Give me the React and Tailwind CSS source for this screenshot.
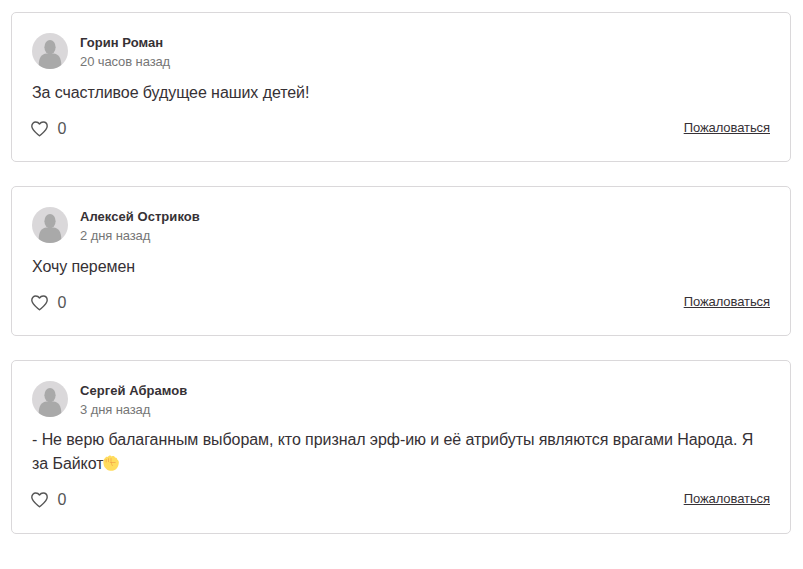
const comments = [
  {
    id: 1,
    author: 'Горин Роман',
    date: '20 часов назад',
    text: 'За счастливое будущее наших детей!',
    likes: 0,
  },
  {
    id: 2,
    author: 'Алексей Остриков',
    date: '2 дня назад',
    text: 'Хочу перемен',
    likes: 0,
  },
  {
    id: 3,
    author: 'Сергей Абрамов',
    date: '3 дня назад',
    text: '- Не верю балаганным выборам, кто признал эрф-ию и её атрибуты являются врагами Народа. Я за Байкот',
    fist: true,
    likes: 0,
  },
];

function Avatar() {
  return (
    <svg viewBox="0 0 36 36" className="h-9 w-9 shrink-0">
      <circle cx="18" cy="18" r="18" fill="#dad8da" />
      <ellipse cx="18" cy="14.200" rx="5.600" ry="7.200" fill="#a9a9a9" />
      <path fill="#a9a9a9" d="M6.700 32c0-6.800 2.600-11.200 8-11.500h6.600c5.400.3 8 4.700 8 11.500C26.200 34.600 22.200 36 18 36S9.800 34.600 6.700 32Z" />
    </svg>
  );
}

function Heart() {
  return (
    <svg viewBox="0 0 17 16" fill="none" className="-ml-px h-4 w-[17px]">
      <path
        stroke="#555"
        strokeWidth="1.400"
        strokeLinejoin="round"
        d="M8.500 3C7.600 1.700 6.200 1 4.800 1 2.500 1 .8 2.800.8 5.200c0 3.800 4.500 6.800 7.700 9.600 3.200-2.800 7.700-5.800 7.700-9.600C16.200 2.800 14.500 1 12.200 1c-1.400 0-2.800.7-3.700 2Z"
      />
    </svg>
  );
}

function Fist() {
  return (
    <svg viewBox="0 0 16 16" fill="none" className="inline-block h-4 w-4 align-[-2px]">
      <path fill="#ffdc5d" d="M2.200 3.100C2.700 1.900 4 1.500 4.900 2.100 5.500.5 7.700.1 8.700 1.400c1.200-.9 2.900-.4 3.300 1 1.400-.1 2.300.9 2.200 2.200 1.200.7 1.800 2 1.600 3.500-.3 2.700-1.300 5-3.200 6.500-2.200 1.600-6.300 1.700-8.400.1C1.900 13.200.6 11.100.5 8.600.1 6.400.5 4.100 2.200 3.100Z" />
      <path stroke="#ef9645" strokeWidth=".6" strokeLinecap="round" d="M3.200 4.500v2.500M5.500 3.700v3M8 3.500v3M7.200 7.500h5M8.500 7.700c0 1.500.3 2.300 1 3" />
    </svg>
  );
}

function Comment({ author, date, text, likes, fist }) {
  return (
    <article className="rounded-[5px] border border-[#dad8da] p-5 text-[#363135]">
      <header className="flex items-start gap-3">
        <Avatar />
        <div className="text-[13px] leading-[19px]">
          <h3 className="font-bold tracking-[0.05px]">{author}</h3>
          <p className="tracking-[-0.1px] text-[#767676]">{date}</p>
        </div>
      </header>

      <p className="mt-[9.4px] text-base leading-6 tracking-[-0.073px]">
        {text}
        {fist && <Fist />}
      </p>

      <footer className="mt-3 flex h-[24.4px] items-start justify-between">
        <button className="flex items-center gap-[9.5px] text-base leading-6 text-[#555]">
          <Heart />
          {likes}
        </button>
        <button className="mt-px text-[13px] leading-5 tracking-[-0.08px] underline">Пожаловаться</button>
      </footer>
    </article>
  );
}

export default function App() {
  return (
    <main className="flex min-h-screen flex-col gap-6 bg-white pt-[12.4px] pr-3 pl-[11px] font-['Liberation_Sans',Arial,sans-serif]">
      {comments.map((comment) => (
        <Comment key={comment.id} {...comment} />
      ))}
    </main>
  );
}
